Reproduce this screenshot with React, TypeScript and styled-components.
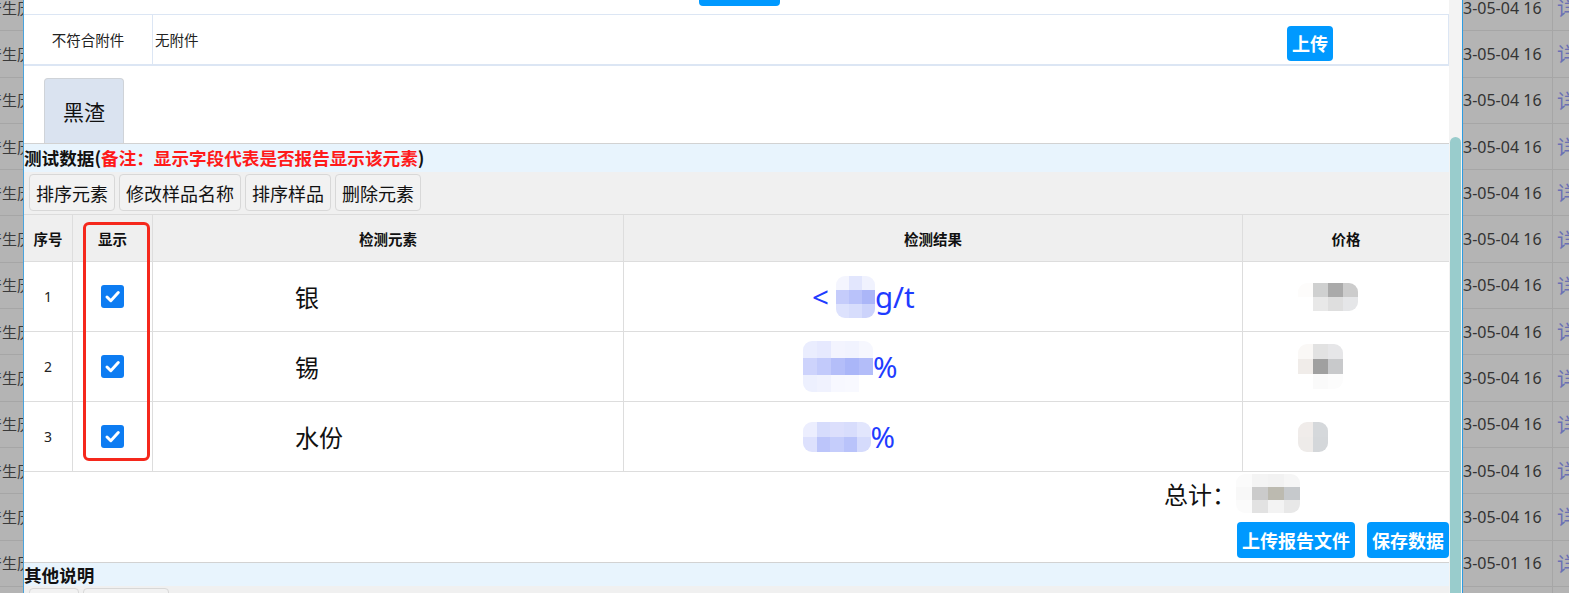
import React from 'react';
import styled, { createGlobalStyle } from 'styled-components';

const GlobalStyle = createGlobalStyle`
  html, body {
    margin: 0;
    padding: 0;
  }
  body {
    font-family: "Noto Sans", "Noto Sans CJK SC", sans-serif;
    color: #111;
    overflow: hidden;
  }
  * { box-sizing: border-box; }
`;

type Mosaic = { w: number; h: number; cells: string[][] };

const bgRows = Array.from({ length: 14 }, (_, i) => (i === 12 ? '3-05-01 16' : '3-05-04 16'));

const items: { no: number; name: string; lead?: string; unit: string; result: Mosaic; price: Mosaic }[] = [
  {
    no: 1,
    name: '银',
    lead: '<',
    unit: 'g/t',
    result: {
      w: 13,
      h: 14,
      cells: [
        ['#f4f5fe', '#e2e6fd', '#f0f2fe'],
        ['#c5ccfb', '#b9c2fa', '#abb6f8'],
        ['#dde2fd', '#d7ddfc', '#ccd3fb'],
      ],
    },
    price: {
      w: 15,
      h: 14,
      cells: [
        ['#fdfcfb', '#cfd0d0', '#aaaaaa', '#cccccc'],
        ['#ffffff', '#e8e8e8', '#dedede', '#e5e6e8'],
      ],
    },
  },
  {
    no: 2,
    name: '锡',
    unit: '%',
    result: {
      w: 14,
      h: 17,
      cells: [
        ['#eaedfe', '#e6e9fe', '#f3f4fe', '#f1f3fe', '#f6f7fe'],
        ['#cdd3fc', '#c2cafb', '#b4bef9', '#aab6f8', '#b3bdf9'],
        ['#edf0fe', '#f0f2fe', '#f7f8ff', '#f8f9ff', '#ffffff'],
      ],
    },
    price: {
      w: 15,
      h: 15,
      cells: [
        ['#faf8f6', '#e2e2e2', '#e6e6e8'],
        ['#f0ece9', '#a0a0a0', '#c8c9cb'],
        ['#ffffff', '#fafafa', '#fcfcfc'],
      ],
    },
  },
  {
    no: 3,
    name: '水份',
    unit: '%',
    result: {
      w: 13.5,
      h: 15,
      cells: [
        ['#eceefe', '#d6dcfc', '#dcdffc', '#d8ddfc', '#e2e6fd'],
        ['#dde1fd', '#bcc5fa', '#c5cdfb', '#b9c3fa', '#d5dbfc'],
      ],
    },
    price: {
      w: 15,
      h: 15,
      cells: [
        ['#f0ecea', '#d5d8db'],
        ['#eeebe9', '#d4d7da'],
      ],
    },
  },
];

const totalMosaic: Mosaic = {
  w: 16,
  h: 13,
  cells: [
    ['#fbfbfb', '#f4f4f4', '#f2f2f2', '#f6f6f6'],
    ['#f8f8f8', '#cbcbcb', '#bcbab0', '#c6c9cc'],
    ['#fbfbfb', '#e2e2e2', '#f3f3f3', '#e8e8e8'],
  ],
};

const Blur: React.FC<{ m: Mosaic }> = ({ m }) => (
  <MosaicGrid $cols={m.cells[0].length} $w={m.w} $h={m.h}>
    {m.cells.flat().map((c, i) => (
      <MosaicCell key={i} $c={c} />
    ))}
  </MosaicGrid>
);

const CheckBox: React.FC = () => (
  <StyledCheck>
    <svg width="23" height="23" viewBox="0 0 23 23">
      <path d="M6 12 L9.8 15.7 L17.3 7.6" fill="none" stroke="#fff" strokeWidth="3" strokeLinecap="round" strokeLinejoin="round" />
    </svg>
  </StyledCheck>
);

const App: React.FC = () => {
  return (
    <>
      <GlobalStyle />
      <Page>
        <LeftStrip>
          {bgRows.map((_, i) => (
            <BgRow key={i}>
              <LeftText>产生历史</LeftText>
            </BgRow>
          ))}
        </LeftStrip>

        <Modal>
          <Content>
            <TopBar>
              <TopButton />
            </TopBar>

            <AttachRow>
              <AttachLabel>不符合附件</AttachLabel>
              <AttachValue>无附件</AttachValue>
              <AttachAction>
                <BlueButton $h={35}>上传</BlueButton>
              </AttachAction>
            </AttachRow>

            <TabBar>
              <Tab>黑渣</Tab>
            </TabBar>

            <SectionHeader $h={29}>
              测试数据(<Note>备注：显示字段代表是否报告显示该元素</Note>)
            </SectionHeader>

            <Toolbar>
              <ToolButton>排序元素</ToolButton>
              <ToolButton>修改样品名称</ToolButton>
              <ToolButton>排序样品</ToolButton>
              <ToolButton>删除元素</ToolButton>
            </Toolbar>

            <TableWrap>
              <HeadRow>
                <HeadCell>序号</HeadCell>
                <HeadCell>显示</HeadCell>
                <HeadCell>检测元素</HeadCell>
                <HeadCell>检测结果</HeadCell>
                <HeadCell>价格</HeadCell>
              </HeadRow>
              {items.map((it) => (
                <BodyRow key={it.no}>
                  <NoCell>{it.no}</NoCell>
                  <CheckCell>
                    <CheckBox />
                  </CheckCell>
                  <NameCell>{it.name}</NameCell>
                  <ResultCell>
                    {it.lead && <Lead>{it.lead}</Lead>}
                    <Blur m={it.result} />
                    <span>{it.unit}</span>
                  </ResultCell>
                  <PriceCell>
                    <Blur m={it.price} />
                  </PriceCell>
                </BodyRow>
              ))}
              <Highlight />
            </TableWrap>

            <TotalRow>
              <TotalLabel>总计：</TotalLabel>
              <Blur m={totalMosaic} />
            </TotalRow>

            <ActionRow>
              <BlueButton $h={36}>上传报告文件</BlueButton>
              <BlueButton $h={36}>保存数据</BlueButton>
            </ActionRow>

            <SectionHeader $h={24}>其他说明</SectionHeader>

            <Toolbar>
              <ToolButton>添加</ToolButton>
              <ToolButton>修改说明</ToolButton>
            </Toolbar>
          </Content>

          <ScrollTrack>
            <ScrollThumb />
          </ScrollTrack>
        </Modal>

        <RightStrip>
          {bgRows.map((d, i) => (
            <BgRow key={i}>
              <DateCell>{d}</DateCell>
              <LinkCell>详情</LinkCell>
            </BgRow>
          ))}
        </RightStrip>
      </Page>
    </>
  );
};

export default App;

const Page = styled.div`
  display: flex;
  width: 1569px;
  height: 593px;
  overflow: hidden;
  background: #b4b4b4;
`;

const LeftStrip = styled.div`
  width: 23px;
  flex-shrink: 0;
  overflow: hidden;
  margin-top: -15px;
`;

const RightStrip = styled.div`
  width: 106px;
  flex-shrink: 0;
  overflow: hidden;
  margin-top: -15px;
`;

const BgRow = styled.div`
  display: flex;
  align-items: center;
  height: 46.3px;
  border-bottom: 1px solid #a6a6a6;
  white-space: nowrap;
  color: #333;
`;

const LeftText = styled.span`
  margin-left: -13px;
  font-family: "Noto Sans CJK SC", sans-serif;
  font-size: 15px;
  line-height: 20px;
  color: #3a3a3a;
`;

const DateCell = styled.div`
  width: 90px;
  flex-shrink: 0;
  height: 100%;
  display: flex;
  align-items: center;
  border-right: 1px solid #a6a6a6;
  font-family: "Noto Sans", sans-serif;
  font-size: 16px;
  color: #333;
`;

const LinkCell = styled.div`
  padding-left: 4px;
  font-family: "Noto Sans CJK SC", sans-serif;
  font-size: 20px;
  color: #6a70b4;
`;

const Modal = styled.div`
  display: flex;
  flex-shrink: 0;
  background: #fff;
  border-left: 1px solid #4aa3dc;
  border-right: 1px solid #2d9be0;
`;

const Content = styled.div`
  width: 1425px;
  flex-shrink: 0;
  display: flex;
  flex-direction: column;
  overflow: hidden;
`;

const ScrollTrack = styled.div`
  width: 13px;
  flex-shrink: 0;
  display: flex;
  flex-direction: column;
  padding: 137px 1px 0 1px;
  background: #f3f3f3;
`;

const ScrollThumb = styled.div`
  flex: 1;
  background: #99cccc;
  border-radius: 6px 6px 0 0;
`;

const TopBar = styled.div`
  height: 15px;
  flex-shrink: 0;
  display: flex;
  justify-content: center;
  padding-left: 6px;
  border-bottom: 1px solid #dce6f4;
`;

const TopButton = styled.div`
  width: 81px;
  height: 30px;
  margin-top: -24px;
  background: #0099ff;
  border-radius: 4px;
`;

const AttachRow = styled.div`
  display: grid;
  grid-template-columns: 129px 1fr 276px;
  height: 51px;
  flex-shrink: 0;
  border-bottom: 2px solid #dce6f4;
  border-right: 1px solid #dce6f4;
  font-family: "Noto Sans CJK SC", sans-serif;
  font-size: 14.5px;
  color: #222;
`;

const AttachLabel = styled.div`
  display: flex;
  align-items: center;
  justify-content: center;
  border-right: 1px solid #dce6f4;
`;

const AttachValue = styled.div`
  display: flex;
  align-items: center;
  padding-left: 2px;
`;

const AttachAction = styled.div`
  display: flex;
  align-items: center;
  justify-content: center;
  padding-top: 8px;
`;

const BlueButton = styled.button<{ $h: number }>`
  height: ${(p) => p.$h}px;
  padding: 0 5px;
  border: none;
  border-radius: 4px;
  background: #0099ff;
  color: #fff;
  font-family: "Noto Sans CJK SC", sans-serif;
  font-weight: 700;
  font-size: 18px;
  line-height: ${(p) => p.$h}px;
  cursor: pointer;
`;

const TabBar = styled.div`
  display: flex;
  height: 77px;
  flex-shrink: 0;
  padding: 12px 0 0 20px;
`;

const Tab = styled.div`
  width: 80px;
  height: 65px;
  display: flex;
  align-items: center;
  justify-content: center;
  background: #dae3f0;
  border: 1px solid #cfd3d8;
  border-bottom: none;
  border-radius: 4px 4px 0 0;
  font-family: "Noto Sans CJK SC", sans-serif;
  font-size: 21px;
  color: #111;
`;

const SectionHeader = styled.div<{ $h: number }>`
  height: ${(p) => p.$h}px;
  flex-shrink: 0;
  display: flex;
  align-items: center;
  background: #e8f4fd;
  border-top: 1px solid #d2d2d2;
  font-family: "Noto Sans CJK SC", sans-serif;
  font-weight: 700;
  font-size: 17.6px;
  line-height: 22px;
  color: #111;
  white-space: nowrap;
`;

const Note = styled.span`
  color: #ff1a1a;
`;

const Toolbar = styled.div`
  display: flex;
  gap: 4px;
  height: 43px;
  flex-shrink: 0;
  padding: 2px 0 0 5px;
  background: #f0f0f0;
  border-bottom: 1px solid #dcdcdc;
`;

const ToolButton = styled.button`
  height: 37px;
  padding: 0 6px;
  border: 1px solid #d8d8d8;
  border-radius: 4px;
  background: #f2f2f2;
  font-family: "Noto Sans CJK SC", sans-serif;
  font-size: 18px;
  color: #111;
  cursor: pointer;
`;

const TableWrap = styled.div`
  position: relative;
  flex-shrink: 0;
`;

const cols = '49px 80px 471px 619px 206px';

const HeadRow = styled.div`
  display: grid;
  grid-template-columns: ${cols};
  height: 47px;
  background: #efefef;
  border-bottom: 1px solid #dddddd;
`;

const HeadCell = styled.div`
  display: flex;
  align-items: center;
  justify-content: center;
  border-right: 1px solid #dddddd;
  font-family: "Noto Sans CJK SC", sans-serif;
  font-weight: 700;
  font-size: 14.5px;
  color: #111;
  &:last-child {
    border-right: none;
  }
`;

const BodyRow = styled.div`
  display: grid;
  grid-template-columns: ${cols};
  height: 70px;
  border-bottom: 1px solid #dddddd;
`;

const BodyCell = styled.div`
  display: flex;
  align-items: center;
  border-right: 1px solid #dddddd;
  &:last-child {
    border-right: none;
  }
`;

const NoCell = styled(BodyCell)`
  justify-content: center;
  font-size: 14px;
  color: #222;
`;

const CheckCell = styled(BodyCell)`
  justify-content: center;
`;

const StyledCheck = styled.span`
  display: inline-flex;
  width: 23px;
  height: 23px;
  border-radius: 3px;
  background: #0d7cf2;
`;

const NameCell = styled(BodyCell)`
  padding-left: 142px;
  font-family: "Noto Sans CJK SC", sans-serif;
  font-size: 24px;
  color: #111;
`;

const ResultCell = styled(BodyCell)`
  padding-left: 179px;
  font-family: "Noto Sans", sans-serif;
  font-size: 29.5px;
  color: #1f3cff;
  line-height: 36px;
`;

const Lead = styled.span`
  margin-left: 9px;
  margin-right: 7px;
`;

const PriceCell = styled(BodyCell)`
  padding-left: 55px;
`;

const MosaicGrid = styled.span<{ $cols: number; $w: number; $h: number }>`
  display: inline-grid;
  grid-template-columns: repeat(${(p) => p.$cols}, ${(p) => p.$w}px);
  grid-auto-rows: ${(p) => p.$h}px;
  border-radius: 9px;
  overflow: hidden;
  flex-shrink: 0;
`;

const MosaicCell = styled.span<{ $c: string }>`
  background: ${(p) => p.$c};
`;

const Highlight = styled.div`
  position: absolute;
  left: 59px;
  top: 7px;
  width: 67px;
  height: 239px;
  border: 3px solid #f5281c;
  border-radius: 6px;
  pointer-events: none;
`;

const TotalRow = styled.div`
  display: flex;
  align-items: center;
  justify-content: flex-end;
  height: 42px;
  flex-shrink: 0;
  padding-right: 149px;
`;

const TotalLabel = styled.span`
  font-family: "Noto Sans CJK SC", sans-serif;
  font-size: 24px;
  color: #111;
`;

const ActionRow = styled.div`
  display: flex;
  justify-content: flex-end;
  gap: 12px;
  flex-shrink: 0;
  margin: 8px 0 4px;
`;
